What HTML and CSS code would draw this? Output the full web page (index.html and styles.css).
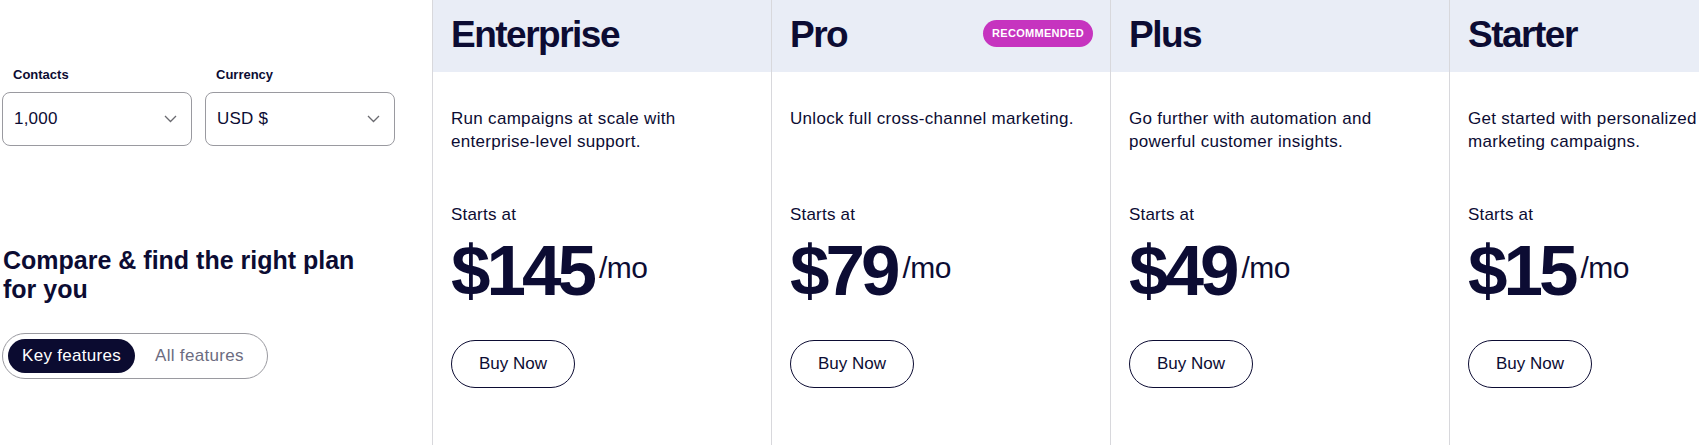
FILE: index.html
```html
<!DOCTYPE html>
<html lang="en">
<head>
<meta charset="utf-8">
<title>Pricing</title>
<link rel="stylesheet" href="styles.css">
</head>
<body>
<div class="page">
  <aside class="side">
    <div class="fields">
      <div class="field">
        <div class="field-label">Contacts</div>
        <div class="select">
          <span class="select-value">1,000</span>
          <svg class="chev" width="13" height="8" viewBox="0 0 13 8"><path d="M1 1l5.5 5.5L12 1" fill="none" stroke="#6a6a70" stroke-width="1.3"/></svg>
        </div>
      </div>
      <div class="field">
        <div class="field-label">Currency</div>
        <div class="select">
          <span class="select-value">USD $</span>
          <svg class="chev" width="13" height="8" viewBox="0 0 13 8"><path d="M1 1l5.5 5.5L12 1" fill="none" stroke="#6a6a70" stroke-width="1.3"/></svg>
        </div>
      </div>
    </div>
    <h2 class="side-title">Compare &amp; find the right plan for you</h2>
    <div class="toggle">
      <span class="toggle-opt active">Key features</span>
      <span class="toggle-opt">All features</span>
    </div>
  </aside>

  <section class="plan">
    <div class="plan-head"><h3 class="plan-name">Enterprise</h3></div>
    <div class="plan-body">
      <p class="plan-desc">Run campaigns at scale with enterprise-level support.</p>
      <div class="starts">Starts at</div>
      <div class="price">$145<span class="per">/mo</span></div>
      <button class="buy">Buy Now</button>
    </div>
  </section>

  <section class="plan">
    <div class="plan-head"><h3 class="plan-name">Pro</h3><span class="badge">RECOMMENDED</span></div>
    <div class="plan-body">
      <p class="plan-desc">Unlock full cross-channel marketing.</p>
      <div class="starts">Starts at</div>
      <div class="price">$79<span class="per">/mo</span></div>
      <button class="buy">Buy Now</button>
    </div>
  </section>

  <section class="plan">
    <div class="plan-head"><h3 class="plan-name">Plus</h3></div>
    <div class="plan-body">
      <p class="plan-desc">Go further with automation and powerful customer insights.</p>
      <div class="starts">Starts at</div>
      <div class="price">$49<span class="per">/mo</span></div>
      <button class="buy">Buy Now</button>
    </div>
  </section>

  <section class="plan">
    <div class="plan-head"><h3 class="plan-name">Starter</h3></div>
    <div class="plan-body">
      <p class="plan-desc">Get started with personalized marketing campaigns.</p>
      <div class="starts">Starts at</div>
      <div class="price">$15<span class="per">/mo</span></div>
      <button class="buy">Buy Now</button>
    </div>
  </section>
</div>
</body>
</html>
```

FILE: styles.css
```css
* { box-sizing: border-box; }

html, body {
  margin: 0;
  padding: 0;
  background: #ffffff;
  overflow: hidden;
}

body {
  font-family: "Liberation Sans", Arial, sans-serif;
  color: #0c0c33;
  width: 1699px;
  height: 445px;
}

.page {
  display: flex;
  height: 445px;
  width: 1788px;
}

/* left side */
.side {
  width: 432px;
  flex-shrink: 0;
  padding: 66px 0 0 2px;
}

.fields {
  display: flex;
  gap: 13px;
}

.field { width: 190px; }

.field-label {
  font-size: 13px;
  font-weight: 700;
  line-height: 18px;
  margin: 0 0 8px 11px;
}

.select {
  height: 54px;
  border: 1px solid #9a9aa0;
  border-radius: 8px;
  display: flex;
  align-items: center;
  justify-content: space-between;
  padding: 0 14px 0 11px;
}

.select-value {
  font-size: 17px;
  line-height: 24px;
  letter-spacing: 0.2px;
}

.chev { display: block; }

.side-title {
  margin: 100px 0 0 1px;
  width: 380px;
  font-size: 25px;
  line-height: 29px;
  font-weight: 700;
}

.toggle {
  margin-top: 29px;
  display: inline-flex;
  align-items: center;
  gap: 6px;
  height: 46px;
  padding: 0 9px 0 5px;
  border: 1px solid #9a9aa0;
  border-radius: 23px;
}

.toggle-opt {
  font-size: 17px;
  line-height: 34px;
  height: 34px;
  padding: 0 14px;
  color: #6c6c80;
  border-radius: 17px;
  letter-spacing: 0.3px;
}

.toggle-opt.active {
  background: #0b0b30;
  color: #ffffff;
  padding: 0 14px 0 14px;
}

/* plan columns */
.plan {
  width: 339px;
  flex-shrink: 0;
  border-left: 1px solid #d8d8dc;
}

.plan-head {
  height: 72px;
  background: #e9edf6;
  display: flex;
  align-items: flex-start;
  justify-content: space-between;
  padding: 13px 17px 0 18px;
}

.plan-name {
  margin: 0;
  font-size: 37px;
  line-height: 44px;
  font-weight: 700;
  letter-spacing: -1.5px;
}

.badge {
  margin-top: 7px;
  height: 27px;
  line-height: 27px;
  padding: 0 9px;
  border-radius: 14px;
  background: #c634bf;
  color: #ffffff;
  font-size: 11px;
  font-weight: 700;
  letter-spacing: 0.3px;
}

.plan-body {
  padding: 35px 17px 0 18px;
}

.plan-desc {
  margin: 0;
  max-width: 292px;
  font-size: 17px;
  line-height: 23px;
  height: 96px;
  letter-spacing: 0.3px;
}

.starts {
  font-size: 17px;
  line-height: 24px;
  letter-spacing: 0.2px;
}

.price {
  margin-top: 5px;
  font-size: 71px;
  line-height: 71px;
  font-weight: 700;
  letter-spacing: -4px;
  white-space: nowrap;
}

.per {
  font-size: 30px;
  font-weight: 400;
  letter-spacing: -0.5px;
  vertical-align: 17px;
  margin-left: 6px;
}

.buy {
  margin-top: 34px;
  width: 124px;
  height: 48px;
  border: 1px solid #0c0c33;
  border-radius: 24px;
  background: #ffffff;
  color: #0c0c33;
  font-family: "Liberation Sans", Arial, sans-serif;
  font-size: 17px;
  padding: 0;
}
```
